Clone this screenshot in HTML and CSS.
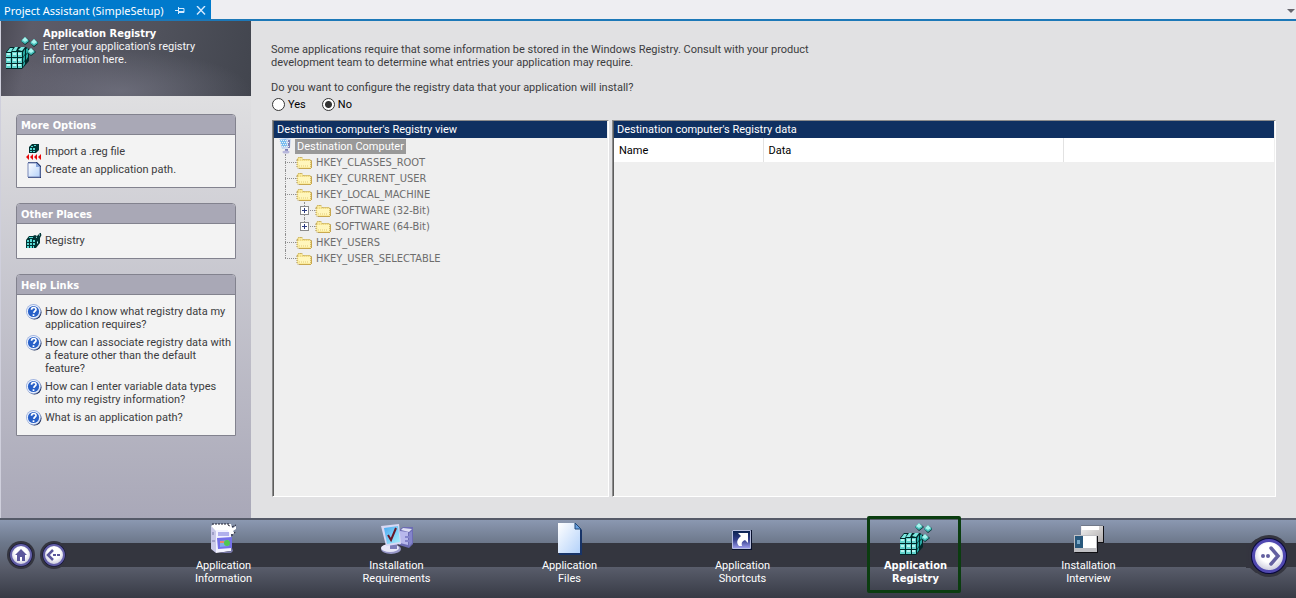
FILE: index.html
```html
<!DOCTYPE html>
<html lang="en">
<head>
  <meta charset="UTF-8">
  <title>Project Assistant (SimpleSetup)</title>
  <link rel="stylesheet" href="styles.css">
</head>
<body>
  <!-- shared icons -->
  <svg class="sprite" aria-hidden="true">
    <linearGradient id="sheet" x1="0" y1="0" x2="1" y2="1">
      <stop offset="0" stop-color="#ffffff"/><stop offset="1" stop-color="#b4d2fa"/>
    </linearGradient>
    <linearGradient id="screen" x1="0" y1="0" x2="1" y2="1">
      <stop offset="0" stop-color="#4aa8f0"/><stop offset="1" stop-color="#a8f0fc"/>
    </linearGradient>
    <linearGradient id="shortcut" x1="0" y1="0" x2="0" y2="1">
      <stop offset="0" stop-color="#08204c"/><stop offset=".5" stop-color="#303c88"/><stop offset="1" stop-color="#a0a0f0"/>
    </linearGradient>
    <linearGradient id="win" x1="0" y1="0" x2="1" y2="1">
      <stop offset="0" stop-color="#f4f4f4"/><stop offset="1" stop-color="#b0acac"/>
    </linearGradient>
    <radialGradient id="knob" cx=".5" cy=".4" r=".6">
      <stop offset=".5" stop-color="#ffffff"/><stop offset="1" stop-color="#c4c4d8"/>
    </radialGradient>
    <symbol id="cubes" viewBox="0 0 32 32">
      <path d="M0 15l4-5h16l3 2v12l-7 8H0z" fill="#002828"/>
      <path d="M1 15l3-4h3l-2 4zM6 14l3-4h3l-2 4zM12 13l3-3h4l-3 4z" fill="#7ce8e0"/>
      <path d="M0 16h5v4H0zM6 15h5v5H6zM12 15h4v5h-4zM0 21h5v5H0zM6 21h5v5H6zM12 21h4v5h-4zM0 27h5v4H0zM6 27h5v4H6zM12 27h4v4h-4z" fill="#62d4ce"/>
      <path d="M1 16h3v2H1zM7 16h3v2H7zM12 16h3v2h-3zM1 22h3v2H1zM7 22h3v2H7zM12 22h3v2h-3zM1 27h3v2H1zM7 27h3v2H7zM12 27h3v2h-3z" fill="#b8f6f0"/>
      <path d="M17 15l2-3v5l-2 3zM17 21l2-3v5l-2 3zM17 27l2-3v3l-2 3zM20 12l2-1v4l-2 2zM20 18l2-2v4l-2 3z" fill="#28a8a4"/>
      <path d="M19 0l5 4-5 4-4-4zM28 2l5 4-5 4-4-4zM25 11l5 4-5 4-4-4z" fill="#002c2c"/>
      <path d="M19 0l4 4-4 3-4-3zM28 2l4 4-4 3-4-3zM25 11l4 4-4 3-4-3z" fill="#48c0bc"/>
      <path d="M19 0l3 3-3 2-3-2zM28 2l3 3-3 2-3-2zM25 11l3 3-3 2-3-2z" fill="#a8f4ee"/>
    </symbol>
    <symbol id="cubes-small" viewBox="0 0 16 16">
      <path d="M0 7l3-4h4l2-1 2 1 3-3h1v2l1-1-2 4v5l-4 5H0z" fill="#003434"/>
      <path d="M1 7h2v2H1zM4 6h2v3H4zM1 10h2v2H1zM4 10h2v2H4zM1 13h2v2H1zM4 13h2v2H4zM7 7h2v2H7zM7 10h2v2H7zM7 13h1v2H7zM3 4h4v1H3z" fill="#58dcd6"/>
      <path d="M10 5l1-2v2zM13 2l1-1v2zM11 9l1-1v2l-1 1z" fill="#b8ffff"/>
    </symbol>
    <symbol id="import" viewBox="0 0 16 16">
      <path d="M3 3l3-3h7v6l-3 3H3z" fill="#003434"/>
      <path d="M4 4h2v2H4zM7 4h2v2H7zM4 7h2v1H4zM7 7h2v1H7zM5 2h2v1H5zM8 1h2v1H8z" fill="#58dcd6"/>
      <path d="M0 13l3-3v6zM4 13l3-3v6zM8 13l3-3v6zM12 13l3-3v6z" fill="#e80808"/>
    </symbol>
    <symbol id="page" viewBox="0 0 26 32">
      <path d="M2 1h17l6 6v25H2z" fill="#183468"/>
      <path d="M1 0h17l5 6v24H1z" fill="url(#sheet)"/>
      <path d="M18 0l6 6h-6z" fill="#68a0e0" stroke="#204878"/>
    </symbol>
    <symbol id="page-small" viewBox="0 0 16 16">
      <path d="M2 0h9l4 4v12H2z" fill="#283c70"/>
      <path d="M2 1h8l4 4v10H2z" fill="url(#sheet)" stroke="#7888b8"/>
      <path d="M10 1v4h4z" fill="#88a8e0"/>
    </symbol>
    <symbol id="help" viewBox="0 0 16 16">
      <circle cx="8.500" cy="8.500" r="7" fill="#1c2c58"/>
      <circle cx="7.500" cy="7.500" r="7.500" fill="#a0b4e0"/>
      <circle cx="7.500" cy="7.500" r="6.600" fill="#f0f6ff"/>
      <circle cx="7.500" cy="7.500" r="5.600" fill="#2860c8"/>
      <path d="M5.500 5.800c0-3 4.500-3 4.500-.4 0 1.600-2 1.600-2.200 3.400M7.500 10.300v1.700" fill="none" stroke="#fff" stroke-width="1.700"/>
    </symbol>
    <symbol id="folder" viewBox="0 0 16 16">
      <path d="M1 5l1-2h4l1 2h7l1 1v8H2l-1-1z" fill="#fbeb9c"/>
      <path d="M2 7h12v6H3z" fill="#fff6bc"/>
      <path d="M1 6l1-2 1-.5h3l1 2h7l1 1M1 6v7l1 1.500h13M15 6v8" fill="none" stroke="#a88c44" stroke-dasharray="1 1"/>
      <path d="M2 6h12M3 12h10" stroke="#e4cc78" stroke-dasharray="1 1"/>
      <path d="M4 14.500h11M15.500 7v7" stroke="#c8a850"/>
    </symbol>
    <symbol id="computer" viewBox="0 0 16 16">
      <path d="M2 1l8-1 4 1-1 9-8 1z" fill="#c4d4f0"/>
      <path d="M3 2l6-1 1 7-5 1z" fill="#78bcf0"/>
      <path d="M11 2h2v8h-2zM8 11h3v2H8z" fill="#8080b8"/>
      <ellipse cx="9" cy="14" rx="3.500" ry="1.500" fill="#b8b8dc"/>
      <path d="M2 2.500h10M3 4.500h10M2 6.500h10M3 8.500h9" stroke="#f0f0f0" stroke-dasharray="1 1"/>
    </symbol>
  </svg>

  <header class="tab-strip">
    <div class="tab">
      <span>Project Assistant (SimpleSetup)</span>
      <button type="button" aria-label="Pin">
        <svg width="10" height="9" viewBox="0 0 10 9"><path d="M0 4.500h3M3.500 1v7M4 2.500h5v4H4M4 5.500h5" fill="none" stroke="#d4eaff"/></svg>
      </button>
      <button type="button" aria-label="Close">
        <svg width="10" height="9" viewBox="0 0 10 9"><path d="M1 0l8 8.500M9 0L1 8.500" stroke="#d4eaff" stroke-width="1.400"/></svg>
      </button>
    </div>
    <button type="button" class="tab-menu" aria-label="Open documents">
      <svg width="8" height="4" viewBox="0 0 8 4"><path d="M0 0h8L4 4z" fill="#66666e"/></svg>
    </button>
  </header>

  <div class="workspace">
    <aside class="sidebar">
      <div class="banner">
        <svg width="32" height="32"><use href="#cubes"/></svg>
        <div>
          <h1>Application Registry</h1>
          <p>Enter your application's registry<br>information here.</p>
        </div>
      </div>

      <section class="box">
        <h2>More Options</h2>
        <ul>
          <li><svg class="icon"><use href="#import"/></svg><a href="#">Import a .reg file</a></li>
          <li><svg class="icon"><use href="#page-small"/></svg><a href="#">Create an application path.</a></li>
        </ul>
      </section>

      <section class="box">
        <h2>Other Places</h2>
        <ul>
          <li><svg class="icon"><use href="#cubes-small"/></svg><a href="#">Registry</a></li>
        </ul>
      </section>

      <section class="box">
        <h2>Help Links</h2>
        <ul>
          <li><svg class="icon"><use href="#help"/></svg><a href="#">How do I know what registry data my<br>application requires?</a></li>
          <li><svg class="icon"><use href="#help"/></svg><a href="#">How can I associate registry data with<br>a feature other than the default<br>feature?</a></li>
          <li><svg class="icon"><use href="#help"/></svg><a href="#">How can I enter variable data types<br>into my registry information?</a></li>
          <li><svg class="icon"><use href="#help"/></svg><a href="#">What is an application path?</a></li>
        </ul>
      </section>
    </aside>

    <main class="content">
      <p>Some applications require that some information be stored in the Windows Registry. Consult with your product<br>development team to determine what entries your application may require.</p>
      <p id="question">Do you want to configure the registry data that your application will install?</p>
      <div class="radios" role="radiogroup" aria-labelledby="question">
        <label><input type="radio" name="configure" value="yes">Yes</label>
        <label><input type="radio" name="configure" value="no" checked>No</label>
      </div>

      <div class="panes">
        <section class="pane">
          <h3>Destination computer's Registry view</h3>
          <div class="tree">
            <div class="row root"><svg class="icon"><use href="#computer"/></svg><span>Destination Computer</span></div>
            <ul>
              <li><div class="row"><svg class="icon"><use href="#folder"/></svg>HKEY_CLASSES_ROOT</div></li>
              <li><div class="row"><svg class="icon"><use href="#folder"/></svg>HKEY_CURRENT_USER</div></li>
              <li>
                <div class="row"><svg class="icon"><use href="#folder"/></svg>HKEY_LOCAL_MACHINE</div>
                <ul>
                  <li><button type="button" class="expand" aria-label="Expand"></button><div class="row"><svg class="icon"><use href="#folder"/></svg>SOFTWARE (32-Bit)</div></li>
                  <li><button type="button" class="expand" aria-label="Expand"></button><div class="row"><svg class="icon"><use href="#folder"/></svg>SOFTWARE (64-Bit)</div></li>
                </ul>
              </li>
              <li><div class="row"><svg class="icon"><use href="#folder"/></svg>HKEY_USERS</div></li>
              <li><div class="row"><svg class="icon"><use href="#folder"/></svg>HKEY_USER_SELECTABLE</div></li>
            </ul>
          </div>
        </section>

        <section class="pane">
          <h3>Destination computer's Registry data</h3>
          <table>
            <colgroup><col class="col-name"><col class="col-data"><col></colgroup>
            <thead><tr><th>Name</th><th>Data</th><th></th></tr></thead>
          </table>
        </section>
      </div>
    </main>
  </div>

  <footer class="nav-bar">
    <div class="nav-left">
      <button type="button" aria-label="Home">
        <svg width="28" height="28" viewBox="0 0 28 28">
          <circle cx="14" cy="14" r="14" fill="#34353f"/>
          <circle cx="14" cy="14" r="11.500" fill="#0e0e38"/>
          <circle cx="14" cy="14" r="10" fill="url(#knob)" stroke="#6460a8" stroke-width="2"/>
          <path d="M14 8l6 6h-2v6h-3v-4h-2v4h-3v-6H8z" fill="#5c589c"/>
        </svg>
      </button>
      <button type="button" aria-label="Back">
        <svg width="28" height="28" viewBox="0 0 28 28">
          <circle cx="14" cy="14" r="14" fill="#34353f"/>
          <circle cx="14" cy="14" r="11.500" fill="#0e0e38"/>
          <circle cx="14" cy="14" r="10" fill="url(#knob)" stroke="#6460a8" stroke-width="2"/>
          <path d="M13 9l-5 5 5 5" fill="none" stroke="#5c589c" stroke-width="2.500"/>
          <path d="M13 13h3v2h-3zM17 13h3v2h-3z" fill="#5c589c"/>
        </svg>
      </button>
    </div>

    <nav class="steps">
      <a href="#">
        <svg width="32" height="32" viewBox="0 0 32 32">
          <path d="M3 3l5 4v23l-5-4z" fill="#c8c8e8"/>
          <path d="M3 3l3-2h17l1 4-4 3H8z" fill="#fff"/>
          <path d="M8 7h15v21l-15 2z" fill="#f2f2ff"/>
          <path d="M23 7l1 18 1 3-2 2H10l13-2z" fill="#7878a8"/>
          <path d="M10 9h11v4H10z" fill="#b0b0ec"/>
          <path d="M9 15l15-1v11l-14 1z" fill="#7470e8"/>
          <path d="M12 18l9-1v6l-9 1z" fill="#80a8e8"/>
          <circle cx="19" cy="20" r="3" fill="#50c850"/>
          <path d="M12 18h4v2h-4z" fill="#e88868"/>
          <path d="M20 3l5 2 3-2v3l-3 2 2 3h-4l-3-3z" fill="#fff"/>
          <path d="M4 1h17M20 2l2 1M24 4l4-2M27 9l-1 2M24 11v3" stroke="#202030" stroke-dasharray="2 1"/>
          <path d="M5 9v3M4 18h3" stroke="#7878a8"/>
        </svg>
        <span>Application<br>Information</span>
      </a>
      <a href="#">
        <svg width="32" height="32" viewBox="0 0 32 32">
          <path d="M18 7l4-3h10v17l-4 4-10-3z" fill="#6c6cb4"/>
          <path d="M19 8l8 1v13l-8-2z" fill="#b8b8ec"/>
          <path d="M22 5l9 1-3 3-8-2z" fill="#dedef4"/>
          <path d="M28 10l3-2v12l-3 3zM24 13h6v2h-6zM24 17h6v2h-6z" fill="#8484cc"/>
          <ellipse cx="10" cy="26" rx="10" ry="5" fill="#9898c8"/>
          <ellipse cx="9" cy="25" rx="9" ry="4" fill="#e8e8f8"/>
          <path d="M9 20h7v6H9z" fill="#7c7cb8"/>
          <path d="M0 3l18-2 2 20-15 2z" fill="#d8d8f4"/>
          <path d="M3 5l14-2 2 16-13 2z" fill="url(#screen)"/>
          <path d="M7 12l3 5 5-12" fill="none" stroke="#681828" stroke-width="2"/>
        </svg>
        <span>Installation<br>Requirements</span>
      </a>
      <a href="#">
        <svg width="32" height="32"><use href="#page"/></svg>
        <span>Application<br>Files</span>
      </a>
      <a href="#">
        <svg width="32" height="32" viewBox="0 0 32 32">
          <path d="M5 7h20v20H5z" fill="#08102c"/>
          <path d="M5.500 7.500h18v18h-18z" fill="url(#shortcut)" stroke="#b8c0e0"/>
          <path d="M11 10h10v10l-3-3c-3 1-4 3-3 6h-3c-3-3-2-7 2-10z" fill="#fff"/>
        </svg>
        <span>Application<br>Shortcuts</span>
      </a>
      <a href="#" class="current" aria-current="step">
        <svg width="32" height="32"><use href="#cubes"/></svg>
        <span>Application<br>Registry</span>
      </a>
      <a href="#">
        <svg width="32" height="32" viewBox="0 0 32 32">
          <path d="M8 3h23v17H8z" fill="#101014"/>
          <path d="M8 2h22v17H8z" fill="url(#win)"/>
          <path d="M8 2h22v1H8z" fill="#707888"/>
          <path d="M9 3h17v4H9z" fill="#fff"/>
          <path d="M2 13h23v17H2z" fill="#101014"/>
          <path d="M1 12h23v17H1z" fill="#c0c0c4"/>
          <path d="M2 13h8v12H2z" fill="#28587c"/>
          <path d="M4 17h3v4H4z" fill="#78a8c8"/>
          <path d="M10 13h13v12H10z" fill="#fff"/>
        </svg>
        <span>Installation<br>Interview</span>
      </a>
    </nav>

    <div class="nav-right">
      <button type="button" aria-label="Next">
        <svg width="46" height="44" viewBox="0 0 46 44">
          <path d="M0 10h4l6-5h20v34H10l-6-5H0z" fill="#34353f"/>
          <circle cx="23" cy="22" r="21" fill="#34353f"/>
          <circle cx="23" cy="22" r="18" fill="#08083c"/>
          <circle cx="23" cy="22" r="15.500" fill="url(#knob)" stroke="#5048b0" stroke-width="3"/>
          <path d="M25 14l7 8-7 8" fill="none" stroke="#6460a0" stroke-width="3.500" stroke-linecap="round"/>
          <circle cx="17" cy="22" r="2" fill="#6460a0"/>
          <circle cx="22" cy="22" r="2" fill="#6460a0"/>
        </svg>
      </button>
    </div>
  </footer>
</body>
</html>
```

FILE: styles.css
```css
* { box-sizing:border-box; }
html, body { margin:0; padding:0; height:100%; }
body {
  display:flex; flex-direction:column;
  background:#e1e1e3;
  font-family:Roboto, sans-serif;
  font-size:11px; line-height:13px;
  color:#3c3c40;
}
h1, h2, h3, p, ul { margin:0; padding:0; font-size:inherit; }
ul { list-style:none; }
a { color:inherit; text-decoration:none; }
button { border:0; padding:0; background:none; cursor:pointer; font:inherit; }
button svg { display:block; }
h1, h2, .tree, .current { font-family:"DejaVu Sans Condensed", "DejaVu Sans", sans-serif; }
.sprite { position:absolute; width:0; height:0; }
.icon { width:16px; height:16px; flex:none; }

/* document tab */
.tab-strip {
  display:flex; justify-content:space-between; align-items:stretch;
  height:21px; flex:none;
  background:#eeeef2; border-bottom:2px solid #1c78b8;
}
.tab {
  display:flex; align-items:center; gap:11px;
  padding:2px 5px 0 4px;
  background:#007acc; color:#fff;
  font-family:"Noto Sans", sans-serif;
}
.tab-menu { padding:2px 1px 0 0; }

.workspace { display:flex; flex:1; }

/* sidebar */
.sidebar {
  width:251px; flex:none;
  border-left:1px solid #cfcfdc;
  background:linear-gradient(#dfdfe1 75px, #a9a8b8);
}
.banner {
  display:flex; align-items:flex-start; gap:5px;
  height:75px; padding:6px 0 0 5px; margin-bottom:18px;
  background:
    radial-gradient(ellipse 130px 40px at 120px 70px, rgba(130,130,146,.5), transparent),
    linear-gradient(100deg, #4c4b56, #5d5c68 12%, #585864 30%, #50525c 60%, #42454e);
  color:#f4f4f6;
}
.banner svg { margin-top:10px; flex:none; }
.banner h1 { color:#fff; font-weight:bold; }
.box {
  margin:0 15px 15px;
  border:1px solid #82828e; border-radius:4px 4px 0 0;
  background:#f3f3f3;
  overflow:hidden;
}
.box h2 {
  height:20px; padding:4px;
  background:#a9a8b6; border-bottom:1px solid #82828e;
  color:#fff;
}
.box ul {
  display:flex; flex-direction:column; gap:5px;
  padding:10px 4px 11px 9px;
}
.box li { display:flex; gap:3px; white-space:nowrap; }
.box .icon { margin:-1px 0 -2px; }

/* registry page */
.content { flex:1; display:flex; flex-direction:column; padding:22px 20px 21px; }
.content p { margin-bottom:12px; }
.content #question { margin-bottom:3px; }
.radios { display:flex; gap:15px; margin-bottom:9px; color:#000; }
.radios label { display:flex; align-items:center; gap:3px; height:14px; }
.radios input {
  appearance:none; width:13px; height:13px; margin:0 0 0 1px;
  border:1px solid #333; border-radius:50%; background:#fff;
}
.radios input:checked { background:radial-gradient(circle, #333 0 3px, #fff 4px); }
.panes { flex:1; display:grid; grid-template-columns:337px 1fr; gap:3px; margin-left:1px; }
.pane {
  border:1px solid; border-color:#8c8c8c #fff #fff #8c8c8c;
  box-shadow:inset 1px 0 #5c5c5c;
  padding:0 1px;
  background:#efefef;
}
.pane h3 {
  height:17px; padding:2px 3px;
  background:#0f3061; color:#fff; font-weight:normal;
}
table { width:100%; table-layout:fixed; border-collapse:collapse; }
.col-name { width:149px; }
.col-data { width:300px; }
th {
  height:24px; padding:0 5px;
  background:#fff; border-right:1px solid #e2e2e2;
  color:#000; font-weight:normal; text-align:left;
}
th:last-child { border-right:0; }

/* registry tree */
.tree { padding-left:3px; color:#6d6d6d; }
.tree ul { margin-left:8px; }
.tree li { position:relative; padding-left:11px; }
.tree li::before {
  content:""; position:absolute; left:0; top:8px;
  width:11px; border-top:1px dotted #909090;
}
.tree li::after {
  content:""; position:absolute; left:0; top:0; bottom:0;
  border-left:1px dotted #909090;
}
.tree li:last-child::after { bottom:auto; height:8px; }
.row { display:flex; align-items:center; gap:4px; height:16px; }
.root { gap:2px; font-family:Roboto, sans-serif; }
.root span { padding:1px 2px; background:#999; color:#fff; }
.expand {
  position:absolute; left:-4px; top:4px; z-index:1;
  width:9px; height:9px;
  border:1px solid #8c8c8c;
  background:
    linear-gradient(#2c3c80, #2c3c80) center / 5px 1px no-repeat,
    linear-gradient(#2c3c80, #2c3c80) center / 1px 5px no-repeat,
    #fff;
}

/* bottom navigation */
.nav-bar {
  display:flex; flex:none; height:80px;
  border-top:2px solid #555a68;
  background:linear-gradient(#8b98b1, #6c778a 23px, #34363f 23px, #34363f 47px, #595d6b 47px, #373a45);
  color:#fff;
}
.nav-left {
  display:flex; gap:5px; align-items:flex-start;
  width:137px; padding:21px 0 0 7px;
  background:linear-gradient(#6c778a, #595d6b) 0 23px / 50px 24px no-repeat;
}
.nav-right { width:121px; padding:14px 4px 0 0; display:flex; justify-content:flex-end; align-items:flex-start; }
.steps { flex:1; display:grid; grid-template-columns:repeat(6, 1fr); text-align:center; }
.steps a {
  position:relative; justify-self:center;
  display:flex; flex-direction:column; align-items:center; gap:4px;
  width:94px; padding-top:3px;
}
.steps .current { font-weight:bold; }
.steps .current::after {
  content:""; position:absolute; inset:-4px 2px 5px -2px;
  border:3px solid #0b3d10; border-radius:2px;
}
```
